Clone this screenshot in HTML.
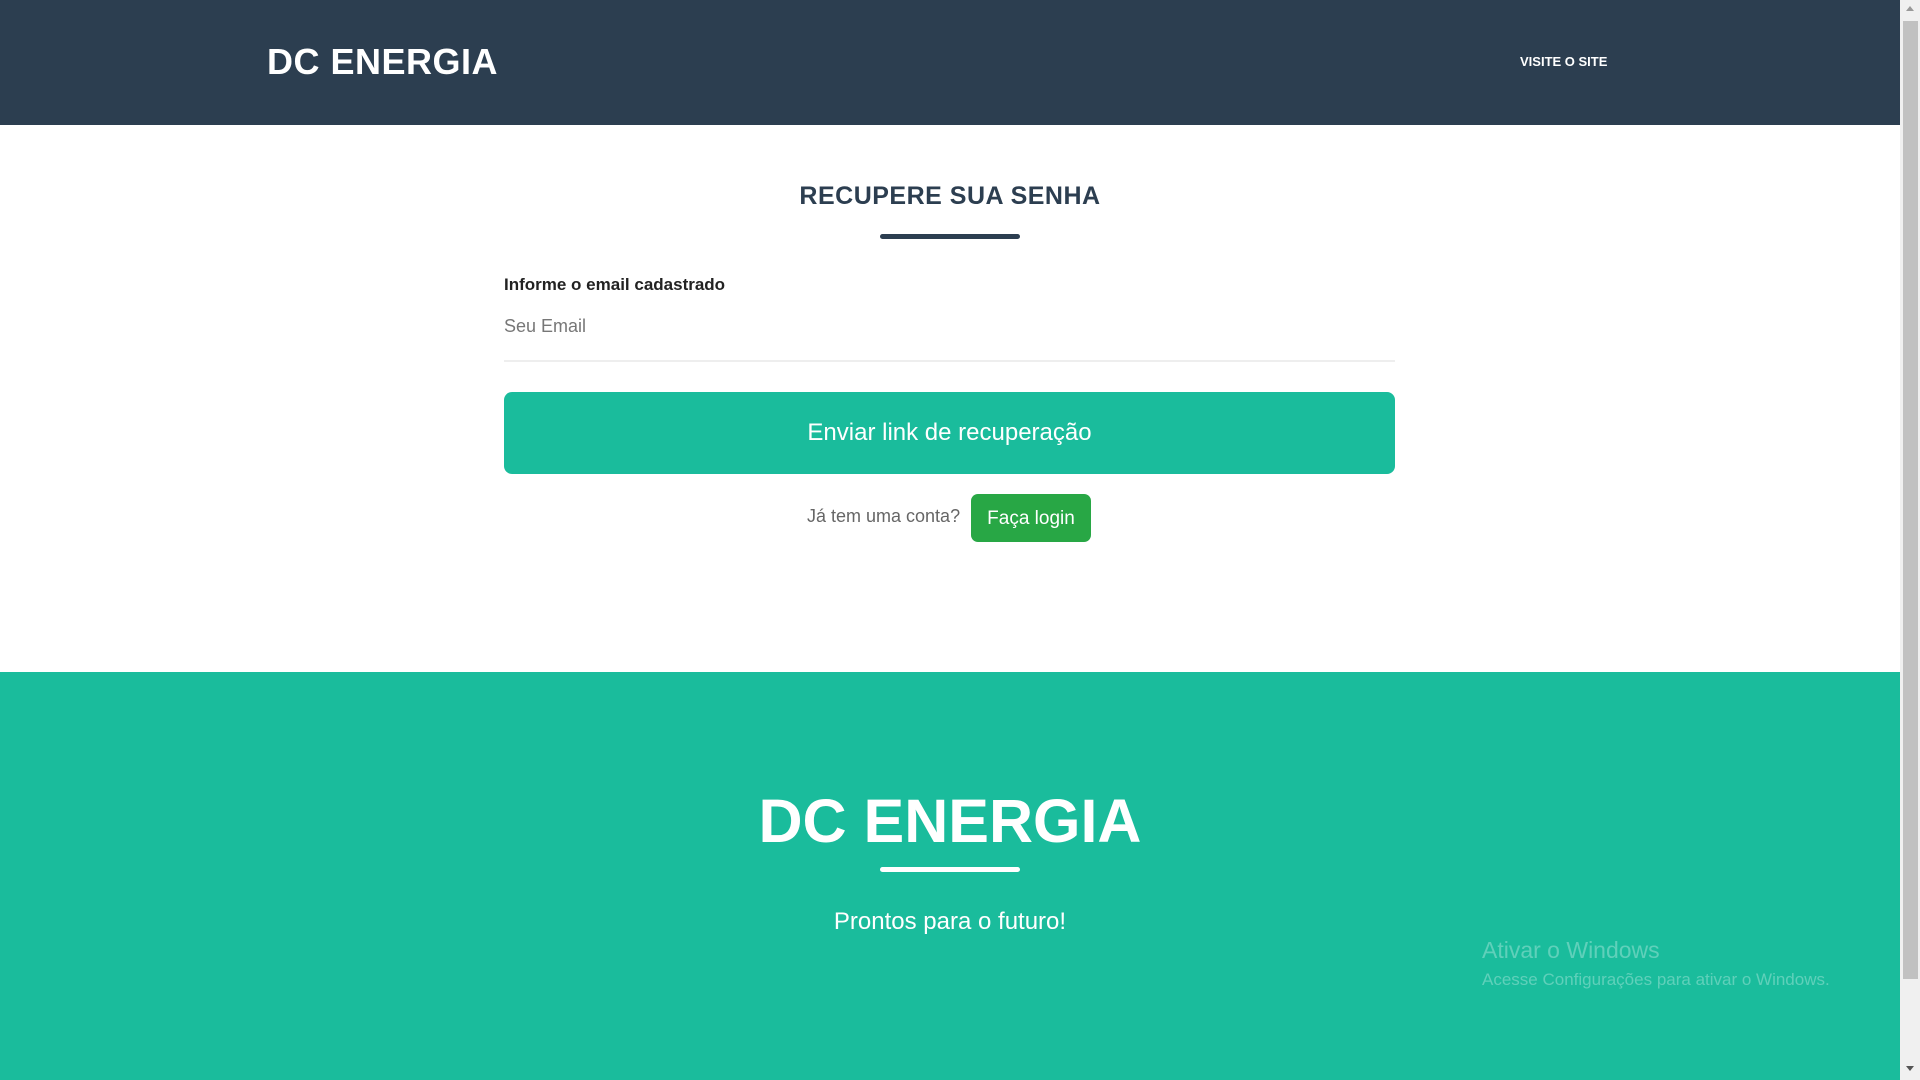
<!DOCTYPE html>
<html><head><meta charset="utf-8"><style>
*{margin:0;padding:0;box-sizing:border-box}
body{width:1920px;height:1080px;overflow:hidden;font-family:"Liberation Sans",sans-serif;background:#fff;position:relative}
.main{position:absolute;left:0;top:0;width:1900px;height:1080px}
header{height:125px;background:#2c3e50;position:relative;color:#fff}
.logo{position:absolute;left:267px;top:41px;font-size:36px;font-weight:bold;letter-spacing:0.5px}
.visit{position:absolute;left:1520px;top:54px;font-size:13px;font-weight:bold}
h2{position:absolute;left:0;width:1900px;text-align:center;top:182px;font-size:25px;color:#2c3e50;font-weight:bold;letter-spacing:0.5px}
.bar{position:absolute;left:880px;width:140px;height:5px;border-radius:3px}
.label{position:absolute;left:504px;top:275px;font-size:17px;font-weight:bold;color:#222}
.ph{position:absolute;left:504px;top:316px;font-size:18px;color:#777}
.line{position:absolute;left:504px;top:360px;width:891px;height:2px;background:#eee}
.btn{position:absolute;left:504px;top:392px;width:891px;height:82px;background:#1abc9c;border-radius:8px;color:#fff;font-size:24px;text-align:center;line-height:82px}
.acc{position:absolute;left:807px;top:506px;font-size:18px;color:#666}
.login{position:absolute;left:971px;top:494px;width:120px;height:48px;background:#28a745;border-radius:7px;color:#fff;font-size:19px;text-align:center;line-height:50px}
footer{position:absolute;top:672px;left:0;width:1900px;height:408px;background:#1abc9c;color:#fff;text-align:center}
.flogo{position:absolute;left:0;width:1900px;top:114px;font-size:61px;font-weight:bold}
.tag{position:absolute;left:0;width:1900px;top:236px;font-size:24px}
.win{position:absolute;left:1482px;top:937px;color:rgba(255,255,255,0.3)}
.scroll{position:absolute;left:1900px;top:0;width:20px;height:1080px;background:#f0f0f0}
.thumb{position:absolute;left:3px;top:21px;width:15px;height:958px;background:#c1c1c1}
</style></head><body>
<div class="main">
<header><div class="logo">DC ENERGIA</div><div class="visit">VISITE O SITE</div></header>
<h2>RECUPERE SUA SENHA</h2>
<div class="bar" style="top:234px;background:#2c3e50"></div>
<div class="label">Informe o email cadastrado</div>
<div class="ph">Seu Email</div>
<div class="line"></div>
<div class="btn">Enviar link de recuperação</div>
<div class="acc">Já tem uma conta?</div>
<div class="login">Faça login</div>
<footer>
<div class="flogo">DC ENERGIA</div>
<div class="bar" style="top:195px;background:#fff"></div>
<div class="tag">Prontos para o futuro!</div>
</footer>
<div class="win"><div style="font-size:23px">Ativar o Windows</div><div style="font-size:17px;margin-top:6px">Acesse Configurações para ativar o Windows.</div></div>
</div>
<div class="scroll"><div class="thumb"></div>
<div style="position:absolute;left:6px;top:6px;border-left:4px solid transparent;border-right:4px solid transparent;border-bottom:5px solid #999"></div>
<div style="position:absolute;left:6px;top:1066px;border-left:4px solid transparent;border-right:4px solid transparent;border-top:5px solid #555"></div>
</div>
</body></html>
